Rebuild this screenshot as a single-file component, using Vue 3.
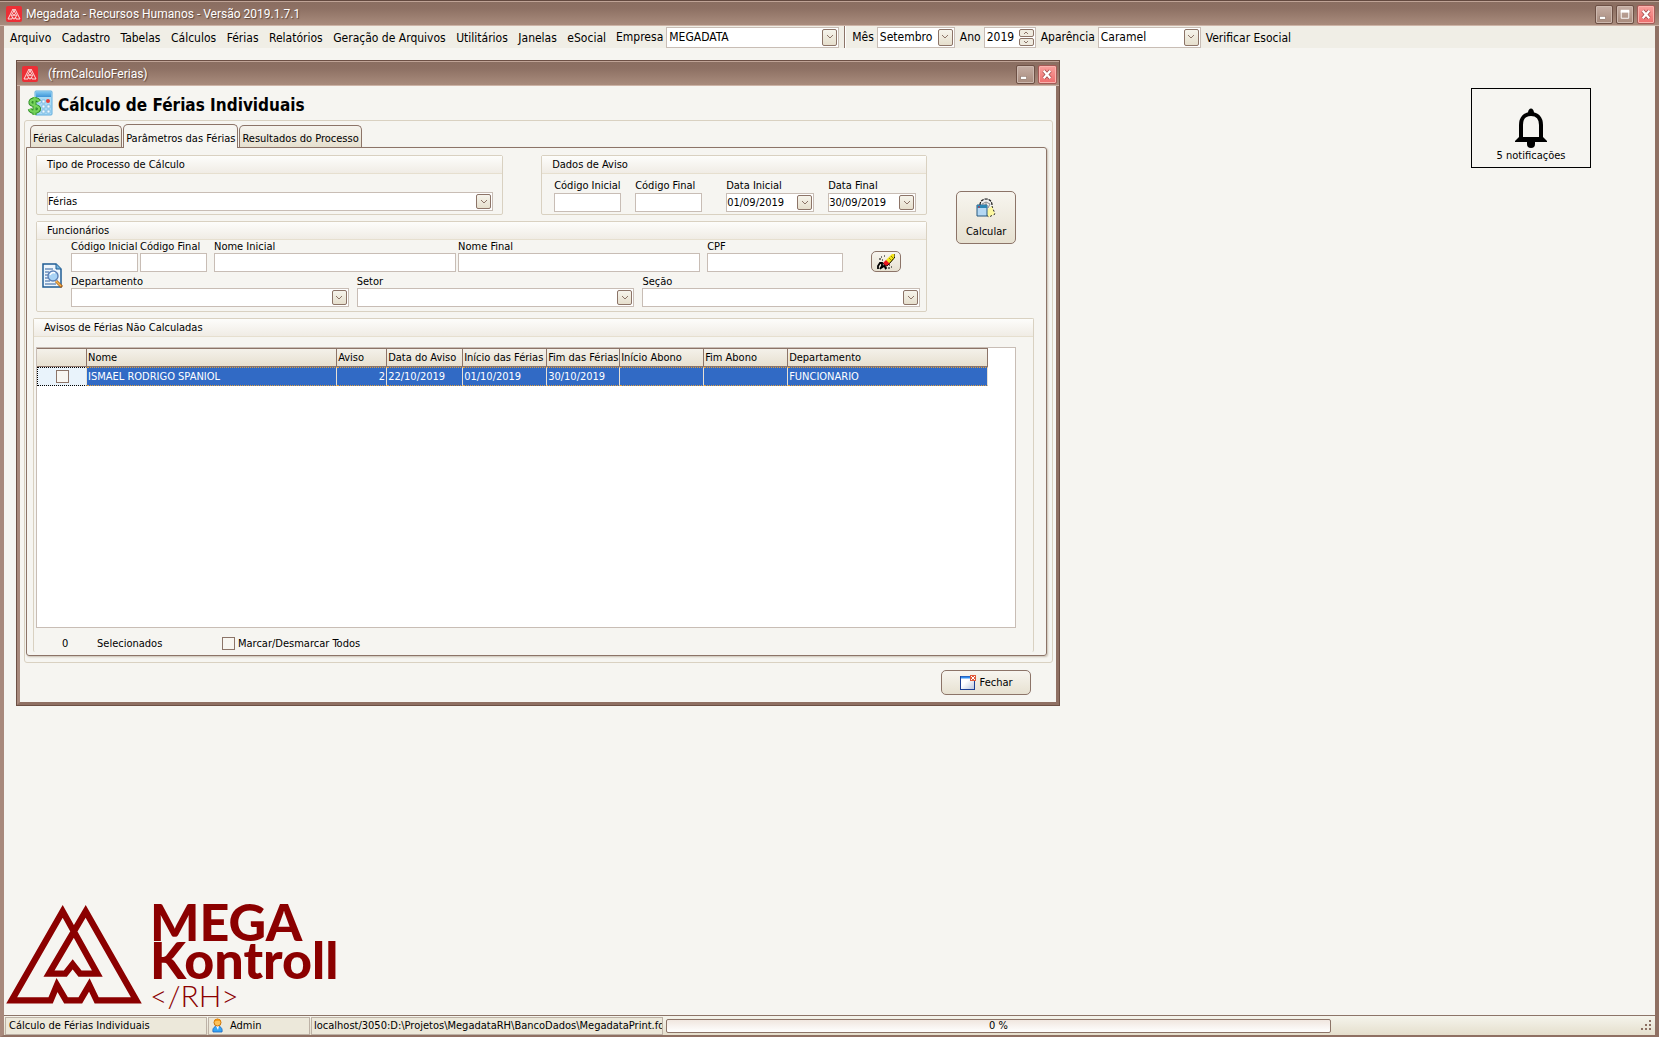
<template>
    <div class="app-window">
        <header class="titlebar">
            <svg class="app-icon" viewBox="0 0 16 16" aria-hidden="true">
                <rect width="16" height="16" rx="2" fill="#ec2f36" />
                <path :d="markSmall" fill="none" stroke="#fbdcdc" stroke-width="1" />
            </svg>
            <h1 class="caption">Megadata - Recursos Humanos - Versão 2019.1.7.1</h1>
            <button class="win-btn" aria-label="Minimizar">
                <svg viewBox="0 0 17 18"><rect x="4" y="11" width="6" height="3" fill="#fff" stroke="#7c6459" stroke-width="0.5" /></svg>
            </button>
            <button class="win-btn" aria-label="Restaurar">
                <svg viewBox="0 0 17 18"><path d="M4.5 5h8v8h-8z" fill="none" stroke="#fff" /><path d="M4 5.5h9" stroke="#fff" stroke-width="3" /></svg>
            </button>
            <button class="win-btn close" aria-label="Fechar janela principal">
                <svg viewBox="0 0 17 18"><path d="M5 5l7 8M12 5l-7 8" stroke="#a04b4b" stroke-width="4" /><path d="M5 5l7 8M12 5l-7 8" stroke="#fff" stroke-width="2.4" /></svg>
            </button>
        </header>

        <div class="toolbar">
            <nav class="menu">
                <a v-for="item in menuItems" :key="item" href="#">{{ item }}</a>
            </nav>
            <label for="empresa">Empresa</label>
            <span class="combo tool empresa">
                <select id="empresa"><option>MEGADATA</option></select>
                <i class="arrow"><svg viewBox="0 0 8 6"><path d="M1 1l3 3 3-3" /></svg></i>
            </span>
            <span class="divider"></span>
            <label for="mes">Mês</label>
            <span class="combo tool mes">
                <select id="mes"><option>Setembro</option></select>
                <i class="arrow"><svg viewBox="0 0 8 6"><path d="M1 1l3 3 3-3" /></svg></i>
            </span>
            <label for="ano">Ano</label>
            <span class="spin">
                <input id="ano" v-model="ano" type="text">
                <span class="spin-btns">
                    <button aria-label="Aumentar ano" @click="ano++"><svg viewBox="0 0 8 4"><path d="M2 3l2-2 2 2" /></svg></button>
                    <button aria-label="Diminuir ano" @click="ano--"><svg viewBox="0 0 8 4"><path d="M2 1l2 2 2-2" /></svg></button>
                </span>
            </span>
            <label for="aparencia">Aparência</label>
            <span class="combo tool aparencia">
                <select id="aparencia"><option>Caramel</option></select>
                <i class="arrow"><svg viewBox="0 0 8 6"><path d="M1 1l3 3 3-3" /></svg></i>
            </span>
            <a href="#">Verificar Esocial</a>
        </div>

        <main class="desktop">
            <section class="child-window">
                <header class="titlebar child">
                    <svg class="app-icon" viewBox="0 0 16 16" aria-hidden="true">
                        <rect width="16" height="16" rx="2" fill="#ec2f36" />
                        <path :d="markSmall" fill="none" stroke="#fbdcdc" stroke-width="1" />
                    </svg>
                    <h2 class="caption">(frmCalculoFerias)</h2>
                    <button class="win-btn" aria-label="Minimizar formulário">
                        <svg viewBox="0 0 17 18"><rect x="4" y="11" width="6" height="3" fill="#fff" stroke="#7c6459" stroke-width="0.5" /></svg>
                    </button>
                    <button class="win-btn close" aria-label="Fechar formulário">
                        <svg viewBox="0 0 17 18"><path d="M5 5l7 8M12 5l-7 8" stroke="#a04b4b" stroke-width="4" /><path d="M5 5l7 8M12 5l-7 8" stroke="#fff" stroke-width="2.4" /></svg>
                    </button>
                </header>

                <div class="heading">
                    <svg viewBox="0 0 26 26" width="26" height="26" aria-hidden="true">
                        <defs>
                            <linearGradient id="calcBlue" x1="0" y1="0" x2="0" y2="1">
                                <stop offset="0" stop-color="#7cc4ef" />
                                <stop offset="1" stop-color="#3d94d6" />
                            </linearGradient>
                        </defs>
                        <rect x="8" y="1" width="17" height="24" rx="1" fill="#a9daf5" stroke="#62aede" />
                        <rect x="9" y="2" width="15" height="5" fill="url(#calcBlue)" />
                        <path d="M11 10h3v3h-3zM15 10h3v3h-3zM15 15h3v3h-3zM20 15h3v3h-3zM15 20h3v3h-3zM20 20h3v3h-3z" fill="#f2fbff" stroke="#5ea6d6" stroke-width="0.6" />
                        <circle cx="21" cy="11" r="2" fill="#e8403a" />
                        <path d="M12 11.500c-1-2-3-2.500-5-2.200c-3 .5-4 2-3.500 4c.6 2.300 8 2 8.500 5c.4 2.200-2 3.600-4.500 3.600c-2.400 0-4.200-1-4.800-3M7.500 7v18" fill="none" stroke="#2b8a24" stroke-width="4" />
                        <path d="M12 11.500c-1-2-3-2.500-5-2.200c-3 .5-4 2-3.500 4c.6 2.300 8 2 8.500 5c.4 2.200-2 3.600-4.500 3.600c-2.400 0-4.200-1-4.800-3M7.500 7v18" fill="none" stroke="#76d35b" stroke-width="2.200" />
                    </svg>
                    <h3>Cálculo de Férias Individuais</h3>
                </div>

                <div class="frame">
                    <div class="tabs" role="tablist">
                        <button
                            v-for="(tab, i) in tabs"
                            :key="tab"
                            class="tab"
                            :class="{ active: i === activeTab }"
                            role="tab"
                            :aria-selected="i === activeTab"
                            @click="activeTab = i"
                        >
                            {{ tab }}
                        </button>
                    </div>

                    <div class="page">
                        <div class="top">
                            <div class="filters">
                                <div class="filter-row">
                                    <section class="group tipo">
                                        <h4>Tipo de Processo de Cálculo</h4>
                                        <div class="combo">
                                            <select aria-label="Tipo de Processo de Cálculo"><option>Férias</option></select>
                                            <i class="arrow"><svg viewBox="0 0 8 6"><path d="M1 1l3 3 3-3" /></svg></i>
                                        </div>
                                    </section>
                                    <section class="group aviso">
                                        <h4>Dados de Aviso</h4>
                                        <div class="aviso-fields">
                                            <div class="field code">
                                                <label for="aviso-ini">Código Inicial</label>
                                                <input id="aviso-ini" type="text">
                                            </div>
                                            <div class="field code">
                                                <label for="aviso-fim">Código Final</label>
                                                <input id="aviso-fim" type="text">
                                            </div>
                                            <div class="field date first">
                                                <label for="data-ini">Data Inicial</label>
                                                <span class="combo">
                                                    <input id="data-ini" v-model="dataInicial" type="text">
                                                    <button class="arrow" aria-label="Abrir calendário inicial"><svg viewBox="0 0 8 6"><path d="M1 1l3 3 3-3" /></svg></button>
                                                </span>
                                            </div>
                                            <div class="field date">
                                                <label for="data-fim">Data Final</label>
                                                <span class="combo">
                                                    <input id="data-fim" v-model="dataFinal" type="text">
                                                    <button class="arrow" aria-label="Abrir calendário final"><svg viewBox="0 0 8 6"><path d="M1 1l3 3 3-3" /></svg></button>
                                                </span>
                                            </div>
                                        </div>
                                    </section>
                                </div>

                                <section class="group">
                                    <h4>Funcionários</h4>
                                    <div class="func">
                                        <svg class="search-icon" viewBox="0 0 22 25" width="22" height="25" aria-hidden="true">
                                            <path d="M1 1h13l5 5v18H1z" fill="#eef6fc" stroke="#1f5c94" stroke-width="1.500" />
                                            <path d="M14 1v5h5" fill="#79b5dc" stroke="#1f5c94" />
                                            <path d="M3 6h8M3 9h4M3 12h3M3 15h3M3 18h5M3 21h11" stroke="#2c5f9e" />
                                            <path d="M14 18l6 6" stroke="#a8601a" stroke-width="3" />
                                            <path d="M14 18l5 5" stroke="#f8b64c" stroke-width="1.500" />
                                            <circle cx="11" cy="13" r="5" fill="#a9d3f5" stroke="#5d80b5" stroke-width="1.400" />
                                            <path d="M8 12c1-2 3-3 5-2" stroke="#fff" stroke-width="1.500" fill="none" />
                                        </svg>
                                        <div class="func-fields">
                                            <div class="func-row names">
                                                <div class="field code">
                                                    <label for="func-ini">Código Inicial</label>
                                                    <input id="func-ini" type="text">
                                                </div>
                                                <div class="field code">
                                                    <label for="func-fim">Código Final</label>
                                                    <input id="func-fim" type="text">
                                                </div>
                                                <div class="field wide spaced">
                                                    <label for="nome-ini">Nome Inicial</label>
                                                    <input id="nome-ini" type="text">
                                                </div>
                                                <div class="field wide">
                                                    <label for="nome-fim">Nome Final</label>
                                                    <input id="nome-fim" type="text">
                                                </div>
                                                <div class="field cpf spaced">
                                                    <label for="cpf">CPF</label>
                                                    <input id="cpf" type="text">
                                                </div>
                                                <button class="btn erase" aria-label="Limpar filtros">
                                                    <svg viewBox="0 0 18 17" width="18" height="17" aria-hidden="true">
                                                        <path d="M9 7l6-6h3l-1 5-5 5z" fill="#f4e51c" />
                                                        <path d="M18 1v3l-6 7" fill="none" stroke="#000" />
                                                        <path d="M12 5l3 3M14 3l3 3" stroke="#7c7000" stroke-width="0.800" />
                                                        <path d="M6 10l3-3 4 4-3 2H8z" fill="#e8141c" />
                                                        <path d="M6 10l2 3h2l2-2" fill="none" stroke="#000" stroke-width="0.800" />
                                                        <path d="M4 4h1M7 3h1M2 6h2M5 7h1M11 15h2M14 14h1M12 12h1" stroke="#000" stroke-width="1.200" />
                                                        <path d="M1 16v-3l2-3h2v3l-2 3M4 15l3-2 2 2-1 1" fill="none" stroke="#000" stroke-width="1.800" />
                                                    </svg>
                                                </button>
                                            </div>
                                            <div class="func-row lists">
                                                <div v-for="list in lists" :key="list.id" class="field wide">
                                                    <label :for="list.id">{{ list.label }}</label>
                                                    <span class="combo">
                                                        <select :id="list.id"><option></option></select>
                                                        <i class="arrow"><svg viewBox="0 0 8 6"><path d="M1 1l3 3 3-3" /></svg></i>
                                                    </span>
                                                </div>
                                            </div>
                                        </div>
                                    </div>
                                </section>
                            </div>

                            <button class="btn calc">
                                <svg viewBox="0 0 20 20" width="20" height="20" aria-hidden="true">
                                    <path d="M4 8c0-10 12-10 12 0c0 3-2 4-4 4H6z" fill="#efefef" />
                                    <path d="M4 7c0-8 12-8 12 0" fill="none" stroke="#111" stroke-width="1.200" stroke-dasharray="3 1" />
                                    <path d="M6 6l4-2 4 2-2 4M10 4v3" fill="none" stroke="#8d8d8d" />
                                    <path d="M12 11l4-3 3 8-6 3-3-3z" fill="#fdf8a0" />
                                    <path d="M16 8l3 8-6 3-3-2" fill="none" stroke="#222" stroke-dasharray="2 2" />
                                    <path d="M1 7h10v11H1z" fill="#b4d8f4" stroke="#27587e" />
                                    <path d="M1 8.500h10" stroke="#2c86b4" stroke-width="3" />
                                    <path d="M2 9h2" stroke="#e0242c" />
                                </svg>
                                Calcular
                            </button>
                        </div>

                        <section class="group avisos">
                            <h4>Avisos de Férias Não Calculadas</h4>
                            <div class="grid">
                                <table>
                                    <thead>
                                        <tr>
                                            <th class="w50"></th>
                                            <th>Nome</th>
                                            <th class="w50">Aviso</th>
                                            <th class="w76">Data do Aviso</th>
                                            <th class="w84">Início das Férias</th>
                                            <th class="w73">Fim das Férias</th>
                                            <th class="w84">Início Abono</th>
                                            <th class="w84">Fim Abono</th>
                                            <th class="w200">Departamento</th>
                                        </tr>
                                    </thead>
                                    <tbody>
                                        <tr v-for="row in rows" :key="row.nome">
                                            <td class="check"><input v-model="row.marcado" type="checkbox" :aria-label="row.nome"></td>
                                            <td>{{ row.nome }}</td>
                                            <td class="num">{{ row.aviso }}</td>
                                            <td>{{ row.data }}</td>
                                            <td>{{ row.inicio }}</td>
                                            <td>{{ row.fim }}</td>
                                            <td></td>
                                            <td></td>
                                            <td>{{ row.departamento }}</td>
                                        </tr>
                                    </tbody>
                                </table>
                            </div>
                            <div class="summary">
                                <span class="count">{{ selecionados }}</span>
                                <span class="count-label">Selecionados</span>
                                <input id="todos" type="checkbox" :checked="selecionados === rows.length" @change="marcarTodos">
                                <label for="todos">Marcar/Desmarcar Todos</label>
                            </div>
                        </section>
                    </div>
                </div>

                <footer class="actions">
                    <button class="btn fechar">
                        <svg viewBox="0 0 16 16" width="16" height="16" aria-hidden="true">
                            <defs>
                                <linearGradient id="winFill" x1="0" y1="0" x2="1" y2="1">
                                    <stop offset="0.400" stop-color="#fff" />
                                    <stop offset="1" stop-color="#b8c4dc" />
                                </linearGradient>
                            </defs>
                            <rect x="0.500" y="1.500" width="14" height="13" fill="url(#winFill)" stroke="#1c3f94" />
                            <path d="M1 2.500h13" stroke="#2f8cf0" stroke-width="2" />
                            <rect x="10" y="0" width="6" height="6" fill="#e05a3a" />
                            <path d="M11 1l4 4M15 1l-4 4" stroke="#fff" />
                        </svg>
                        Fechar
                    </button>
                </footer>
            </section>

            <button class="notify">
                <svg viewBox="0 0 32 40" width="32" height="40" aria-hidden="true">
                    <path d="M13 5c0-6 6-6 6 0l1 3h-8z" />
                    <path d="M6 31V17c0-7 4-11 10-11s10 4 10 11v14" fill="none" stroke="#000" stroke-width="4" />
                    <path d="M4 29h24l4 4v1H0v-1z" />
                    <path d="M12 34h8v2a4 4 0 0 1-8 0z" />
                </svg>
                5 notificações
            </button>

            <div class="brand">
                <svg class="brand-mark" viewBox="18 46 408 297" width="136" height="99" aria-hidden="true">
                    <path :d="mark" fill="none" stroke="#8b0000" stroke-width="19" stroke-miterlimit="8" />
                </svg>
                <div class="brand-text">
                    <span class="mega">MEGA</span>
                    <span class="kontroll">Kontroll</span>
                    <span class="rh">&lt;/RH&gt;</span>
                </div>
            </div>
        </main>

        <footer class="statusbar">
            <div class="panel form-name">Cálculo de Férias Individuais</div>
            <div class="panel user">
                <svg viewBox="0 0 11 15" width="11" height="15" aria-hidden="true">
                    <path d="M1 14c-1-4 2-6 4.500-6s5.500 2 4.500 6z" fill="#35a5f5" stroke="#1b66c2" stroke-width="0.800" />
                    <path d="M4 8l2 4 1-4z" fill="#fff" />
                    <circle cx="5.500" cy="4.500" r="3.500" fill="#fcc25a" stroke="#c9720a" />
                    <path d="M2 4c0-4 7-4 7 0c-2-2-5-1-7 0z" fill="#f0930f" />
                </svg>
                Admin
            </div>
            <div class="panel path">localhost/3050:D:\Projetos\MegadataRH\BancoDados\MegadataPrint.fdb</div>
            <div class="progress">0 %</div>
            <svg class="grip" viewBox="0 0 12 12" width="12" height="12" aria-hidden="true">
                <path d="M8 0h2v2H8zM4 4h2v2H4zM8 4h2v2H8zM0 8h2v2H0zM4 8h2v2H4zM8 8h2v2H8z" fill="#8c6f62" />
            </svg>
        </footer>
    </div>
</template>

<script setup>
import { computed, ref } from 'vue';

const menuItems = ['Arquivo', 'Cadastro', 'Tabelas', 'Cálculos', 'Férias', 'Relatórios', 'Geração de Arquivos', 'Utilitários', 'Janelas', 'eSocial'];
const tabs = ['Férias Calculadas', 'Parâmetros das Férias', 'Resultados do Processo'];
const lists = [
    { id: 'departamento', label: 'Departamento' },
    { id: 'setor', label: 'Setor' },
    { id: 'secao', label: 'Seção' },
];

const activeTab = ref(1);
const ano = ref(2019);
const dataInicial = ref('01/09/2019');
const dataFinal = ref('30/09/2019');

const rows = ref([
    {
        marcado: false,
        nome: 'ISMAEL RODRIGO SPANIOL',
        aviso: 2,
        data: '22/10/2019',
        inicio: '01/10/2019',
        fim: '30/10/2019',
        departamento: 'FUNCIONARIO',
    },
]);

const selecionados = computed(() => rows.value.filter((row) => row.marcado).length);

const marcarTodos = (event) => {
    rows.value.forEach((row) => {
        row.marcado = event.target.checked;
    });
};

const mark = 'M188 65L35 332H152L171 286L198 332H241L268 286L290 332H409L257 65L147 252H196L218 224L240 252H292Z';
const markSmall = 'M7 3L2 13H6L6.500 11L7.500 13H8.500L9.500 11L10 13H14L9 3L5 10H7L8 8L9 10H11Z';
</script>

<style>
body {
    margin: 0;
    background: #f6f5f1;
}
</style>

<style scoped>
.app-window {
    box-sizing: border-box;
    min-height: 100vh;
    display: flex;
    flex-direction: column;
    background: #f6f5f1;
    border: solid #8f7063;
    border-width: 0 4px 2px;
    border-left-color: #a8897c;
    font-family: "DejaVu Sans Condensed", "DejaVu Sans", "Noto Sans", sans-serif;
    font-size: 11px;
    line-height: 13px;
    color: #000;
}

.app-window *,
.app-window *::before {
    box-sizing: border-box;
}

button,
input,
select {
    font: inherit;
    color: inherit;
    margin: 0;
}

a {
    color: inherit;
    text-decoration: none;
}

h1,
h2,
h3,
h4 {
    margin: 0;
}

.titlebar {
    display: flex;
    align-items: center;
    gap: 3px;
    height: 26px;
    margin: 0 -4px;
    padding: 2px 4px 0 6px;
    background: linear-gradient(#8a6e61, #8d7063 30%, #a98c7d);
    border-top: 1px solid #63493f;
    border-bottom: 1px solid #cdb4a7;
    box-shadow: inset 0 1px #bfa396;
}

.app-icon {
    width: 16px;
    height: 16px;
}

.caption {
    flex: 1;
    padding-left: 1px;
    font: 12px/16px Roboto, "Open Sans", sans-serif;
    color: #fff;
    text-shadow: 1px 1px 1px #5b4238;
}

.win-btn {
    width: 18px;
    height: 19px;
    padding: 0;
    background: linear-gradient(#c5aea4, #a88b7d);
    border: 1px solid #6d5045;
    border-radius: 2px;
    box-shadow: inset 0 0 0 1px #cdb9af;
}

.win-btn svg {
    display: block;
    width: 16px;
    height: 17px;
}

.win-btn.close {
    background: linear-gradient(#f8a09c, #ee6d6d);
    border-color: #a55a56;
    box-shadow: inset 0 0 0 1px #f9b3ae;
}

.toolbar {
    display: flex;
    align-items: center;
    height: 22px;
    background: #f0eee6;
    font-size: 12px;
    line-height: 16px;
    white-space: nowrap;
}

.menu {
    display: flex;
    justify-content: space-between;
    width: 602px;
    padding-left: 6px;
    margin-right: 10px;
}

.toolbar > a,
.menu a {
    padding-top: 1px;
}

.toolbar label {
    margin-right: 3px;
}

.toolbar .combo,
.toolbar .spin {
    margin-right: 5px;
}

.combo {
    position: relative;
    display: flex;
    align-items: center;
    height: 19px;
    background: #fff;
    border: 1px solid #c8bdb5;
}

.combo select,
.combo input {
    appearance: none;
    flex: 1;
    min-width: 0;
    height: 100%;
    padding: 0;
    background: transparent;
    border: 0;
    outline: 0;
}

.arrow {
    position: absolute;
    right: 1px;
    top: 1px;
    bottom: 1px;
    width: 15px;
    display: flex;
    align-items: center;
    justify-content: center;
    padding: 0;
    background: linear-gradient(#f6f4ec, #e6dfcd);
    border: 1px solid #8c7468;
    border-radius: 2px;
    pointer-events: none;
}

button.arrow {
    pointer-events: auto;
}

.arrow svg {
    width: 8px;
    height: 6px;
}

.arrow path,
.spin path {
    fill: none;
    stroke: #8c7468;
}

.combo.tool {
    height: 21px;
}

.combo.tool select {
    padding-left: 2px;
}

.empresa {
    width: 173px;
}

.mes {
    width: 78px;
}

.aparencia {
    width: 103px;
}

.divider {
    width: 2px;
    height: 22px;
    margin-right: 6px;
    background: #8c7468;
    border-right: 1px solid #fff;
}

.spin {
    display: flex;
    width: 52px;
    height: 21px;
    background: #fff;
    border: 1px solid #c8bdb5;
}

.spin input {
    width: 34px;
    padding: 0 0 0 2px;
    border: 0;
    outline: 0;
    background: transparent;
}

.spin-btns {
    display: flex;
    flex-direction: column;
    gap: 1px;
    padding: 1px 0;
}

.spin button {
    width: 15px;
    height: 8px;
    padding: 0;
    background: #efebe0;
    border: 1px solid #8c7468;
    border-radius: 2px;
}

.spin button svg {
    display: block;
    width: 8px;
    height: 4px;
    margin: 0 auto;
}

.desktop {
    position: relative;
    flex: 1;
}

.child-window {
    position: absolute;
    left: 12px;
    top: 12px;
    width: calc(63% + 4px);
    min-width: 1000px;
    background: #f6f5f1;
    border: solid #8f7063;
    border-width: 0 4px 4px;
    border-left-color: #a8897c;
    outline: 1px solid #6d5045;
    outline-offset: -1px;
}

.titlebar.child {
    padding-left: 6px;
    padding-right: 3px;
}

.child .win-btn {
    width: 19px;
}

.child .app-icon {
    margin-right: 6px;
}

.heading {
    display: flex;
    align-items: center;
    gap: 5px;
    height: 34px;
    padding: 0 7px;
}

.heading h3 {
    padding-top: 4px;
    font-size: 17px;
    line-height: 20px;
    font-weight: bold;
}

.frame {
    margin: 0 3px 0 4px;
    padding: 2px 5px 6px 1px;
    border: 1px solid #d9d1c1;
    border-radius: 3px;
}

.tabs {
    display: flex;
    align-items: flex-end;
    gap: 1px;
    height: 24px;
    padding-left: 4px;
}

.tab {
    height: 22px;
    padding: 4px 2px 0;
    background: linear-gradient(#f6f4ee, #e6e0cf);
    border: 1px solid #8c7468;
    border-bottom: 0;
    border-radius: 5px 5px 0 0;
    white-space: nowrap;
}

.tab.active {
    position: relative;
    z-index: 1;
    height: 24px;
    margin-bottom: -1px;
    background: #f6f5f1;
}

.page {
    padding: 7px 12px 3px 6px;
    border: 1px solid #8c7468;
    border-radius: 0 3px 3px 3px;
    box-shadow: 1px 1px 2px #c9c0b2;
}

.top {
    display: flex;
    align-items: flex-start;
    padding-left: 3px;
}

.filters {
    flex: 1;
    min-width: 0;
    display: flex;
    flex-direction: column;
    gap: 6px;
}

.filter-row {
    display: flex;
    gap: 38px;
}

.group {
    border: 1px solid #d9d1c1;
    border-radius: 2px;
}

.group h4 {
    height: 18px;
    padding-left: 10px;
    font-size: 11px;
    font-weight: normal;
    line-height: 18px;
    background: linear-gradient(#fdfdfb, #f0ece5);
    border-bottom: 1px solid #e6dfcf;
}

.tipo {
    flex: 1;
    height: 60px;
}

.tipo .combo {
    margin: 18px 9px 0 10px;
}

.aviso-fields {
    display: flex;
    gap: 14px;
    padding: 5px 10px 0 12px;
}

.field {
    display: flex;
    flex-direction: column;
}

.field label {
    height: 13px;
    white-space: nowrap;
}

.aviso .field label {
    height: 14px;
}

.field > input {
    width: 100%;
    height: 19px;
    padding: 0 2px;
    background: #fff;
    border: 1px solid #c8bdb5;
    outline: 0;
}

.code {
    width: 67px;
}

.date {
    width: 88px;
}

.date.first {
    margin-left: 10px;
}

.func {
    display: flex;
    padding: 0 6px 4px 5px;
}

.search-icon {
    margin: 23px 7px 0 0;
}

.func-fields {
    flex: 1;
    min-width: 0;
}

.func-row {
    display: flex;
}

.names {
    gap: 2px;
    padding-right: 19px;
}

.names .spaced {
    margin-left: 5px;
}

.lists {
    gap: 8px;
    margin-top: 3px;
}

.wide {
    flex: 1;
}

.cpf {
    width: 136px;
}

.btn {
    display: flex;
    align-items: center;
    justify-content: center;
    padding: 0;
    background: linear-gradient(#f7f5ef, #e7e1d1);
    border: 1px solid #8c7468;
    border-radius: 5px;
}

.erase {
    align-self: flex-end;
    width: 30px;
    height: 21px;
    margin-left: 26px;
}

.calc {
    flex-direction: column;
    gap: 7px;
    width: 60px;
    height: 53px;
    margin: 36px 18px 0 29px;
}

.avisos {
    margin-top: 6px;
    border-bottom: 0;
}

.grid {
    min-height: 281px;
    margin: 10px 17px 0 2px;
    background: #fff;
    border: 1px solid #c8bdb5;
}

table {
    width: calc(100% - 27px);
    table-layout: fixed;
    border-collapse: separate;
    border-spacing: 0;
    border-top: 1px solid #8c7468;
}

th {
    height: 18px;
    padding: 0 0 0 1px;
    font-weight: normal;
    text-align: left;
    white-space: nowrap;
    background: linear-gradient(#f4f1ea, #e7e0d0);
    border-right: 1px solid #8c7468;
    border-bottom: 1px solid #8c7468;
}

td {
    height: 19px;
    padding: 0 1px;
    white-space: nowrap;
    color: #fff;
    background: #316ac5;
    border-top: 1px dotted #e0a040;
    border-bottom: 1px dotted #e0a040;
    border-right: 1px solid #e8e0d4;
}

td.check {
    text-align: center;
    background: #e9f3fb;
    border-color: #000;
    border-left: 1px dotted #000;
    border-right-color: #e8e0d4;
}

td.num {
    text-align: right;
}

.w50 {
    width: 50px;
}

.w73 {
    width: 73px;
}

.w76 {
    width: 76px;
}

.w84 {
    width: 84px;
}

.w200 {
    width: 200px;
}

input[type="checkbox"] {
    appearance: none;
    display: inline-block;
    width: 13px;
    height: 13px;
    vertical-align: middle;
    background: #f8f6f1;
    border: 1px solid #8c7468;
}

input[type="checkbox"]:checked {
    background: #8c7468;
    box-shadow: inset 0 0 0 2px #f8f6f1;
}

.summary {
    display: flex;
    align-items: center;
    height: 24px;
    padding: 6px 0 0 28px;
}

.count {
    width: 35px;
}

.count-label {
    width: 125px;
}

.summary label {
    margin-left: 3px;
}

.actions {
    display: flex;
    justify-content: flex-end;
    padding: 7px 25px 7px;
}

.fechar {
    gap: 4px;
    width: 90px;
    height: 25px;
}

.notify {
    position: absolute;
    top: 40px;
    right: 64px;
    width: 120px;
    height: 80px;
    display: flex;
    flex-direction: column;
    align-items: center;
    justify-content: flex-start;
    gap: 1px;
    padding: 19px 0 0;
    background: transparent;
    border: 1px solid #000;
    white-space: nowrap;
}

.brand {
    position: absolute;
    left: 2px;
    bottom: 4px;
    display: flex;
    align-items: flex-start;
    gap: 8px;
    height: 109px;
}

.brand-mark {
    margin-top: 3px;
    overflow: visible;
}

.brand-text {
    display: flex;
    flex-direction: column;
    color: #8b0000;
    font-family: Lato, sans-serif;
    font-weight: 900;
}

.mega,
.kontroll {
    font-size: 52px;
    line-height: 38px;
}

.rh {
    font-size: 30px;
    font-weight: 300;
    line-height: 34px;
}

.statusbar {
    display: flex;
    align-items: center;
    height: 20px;
    padding-left: 1px;
    background: linear-gradient(#f5f4ec, #e5dfcd);
    border-top: 1px solid #8c7468;
}

.panel {
    height: 18px;
    margin-right: 1px;
    padding: 0 3px;
    overflow: hidden;
    line-height: 16px;
    white-space: nowrap;
    background: #ece8da;
    border: 1px solid #bdb2a6;
}

.form-name {
    width: 202px;
}

.user {
    display: flex;
    align-items: center;
    gap: 7px;
    width: 102px;
}

.path {
    width: 352px;
    padding-left: 2px;
}

.progress {
    width: 40.300%;
    height: 14px;
    margin-left: 2px;
    line-height: 12px;
    text-align: center;
    background: linear-gradient(#f0e6df, #fff);
    border: 1px solid #8c7468;
    border-radius: 2px;
}

.grip {
    margin: 0 2px 0 auto;
}
</style>
